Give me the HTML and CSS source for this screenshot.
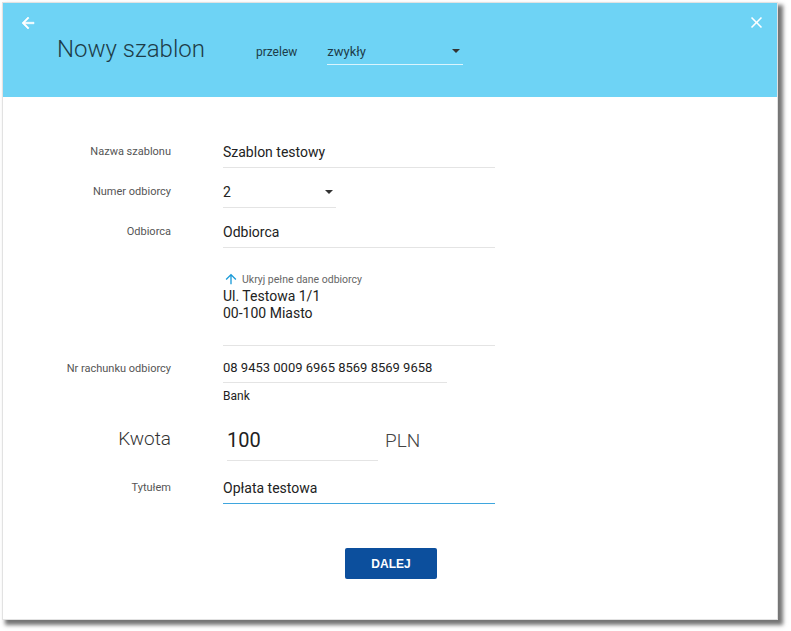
FILE: index.html
```html
<!DOCTYPE html>
<html lang="pl">
<head>
<meta charset="utf-8">
<title>Nowy szablon</title>
<link rel="stylesheet" href="styles.css">
</head>
<body>
<div class="page">
  <div class="card">
    <header class="header">
      <div class="back">
        <svg width="18" height="18" viewBox="0 0 24 24"><path d="M20 11H7.83l5.59-5.59L12 4l-8 8 8 8 1.41-1.41L7.83 13H20v-2z" fill="#fff" stroke="#fff" stroke-width="0.8"/></svg>
      </div>
      <h1 class="title">Nowy szablon</h1>
      <span class="type-label">przelew</span>
      <div class="type-select">
        <span>zwykły</span>
        <span class="caret dark"></span>
      </div>
      <div class="close">
        <svg width="19" height="19" viewBox="0 0 24 24"><path d="M19 6.41L17.59 5 12 10.59 6.41 5 5 6.41 10.59 12 5 17.59 6.41 19 12 13.41 17.59 19 19 17.59 13.41 12z" fill="#fff"/></svg>
      </div>
    </header>
    <main class="form">
      <div class="row">
        <div class="label">Nazwa szablonu</div>
        <div class="field wide">Szablon testowy</div>
      </div>
      <div class="row">
        <div class="label">Numer odbiorcy</div>
        <div class="field narrow select"><span>2</span><span class="caret dark"></span></div>
      </div>
      <div class="row">
        <div class="label">Odbiorca</div>
        <div class="field wide">Odbiorca</div>
      </div>
      <div class="row details">
        <div class="label"></div>
        <div class="detail-box">
          <div class="toggle">
            <svg width="16" height="16" viewBox="0 0 24 24"><path d="M4 12l1.41 1.41L11 7.83V20h2V7.83l5.58 5.59L20 12l-8-8-8 8z" fill="#1b9bd8"/></svg>
            <span>Ukryj pełne dane odbiorcy</span>
          </div>
          <div class="addr">Ul. Testowa 1/1</div>
          <div class="addr">00-100 Miasto</div>
        </div>
      </div>
      <div class="row account">
        <div class="label">Nr rachunku odbiorcy</div>
        <div class="acc-wrap">
          <div class="field account-field">08 9453 0009 6965 8569 8569 9658</div>
          <div class="bank">Bank</div>
        </div>
      </div>
      <div class="row amount">
        <div class="label big">Kwota</div>
        <div class="field amount-field">100</div>
        <div class="currency">PLN</div>
      </div>
      <div class="row">
        <div class="label">Tytułem</div>
        <div class="field wide focused">Opłata testowa</div>
      </div>
      <div class="actions">
        <button class="btn">DALEJ</button>
      </div>
    </main>
  </div>
</div>
</body>
</html>
```
FILE: styles.css
```css
* { box-sizing: border-box; }
html, body { margin: 0; padding: 0; background: #fff; }
body { font-family: Roboto, "Liberation Sans", sans-serif; color: #222; }
.page { padding: 2px 13px 11px 2px; }
.card {
  width: 776px;
  height: 618px;
  background: #fff;
  border: 1px solid #e2e2e2;
  box-shadow: 4px 4px 4px 1px rgba(0,0,0,0.55);
  display: flex;
  flex-direction: column;
}
.header {
  height: 94px;
  background: #6ed3f5;
  display: flex;
  align-items: flex-start;
  position: relative;
}
.back { position: absolute; left: 16px; top: 11px; }
.close { position: absolute; left: 744px; top: 10px; }
.title {
  margin: 31px 0 0 54px;
  font-weight: 300;
  font-size: 24px;
  color: #1d3c48;
  line-height: 30px;
}
.type-label {
  margin: 42px 0 0 51px;
  font-size: 12px;
  color: #1d3c48;
}
.type-select {
  margin: 35px 0 0 30px;
  width: 136px;
  height: 27px;
  border-bottom: 1px solid rgba(255,255,255,0.75);
  display: flex;
  justify-content: space-between;
  align-items: center;
  font-size: 13px;
  color: #1d3c48;
}
.caret {
  width: 0; height: 0;
  border-left: 4px solid transparent;
  border-right: 4px solid transparent;
  border-top: 4px solid #333;
  margin-right: 3px;
}
.form { padding-top: 42px; display: flex; flex-direction: column; }
.row { display: flex; align-items: center; height: 40px; }
.label {
  width: 168px;
  text-align: right;
  font-size: 11px;
  color: #555;
  margin-right: 52px;
  padding-bottom: 16px;
}
.field {
  height: 29px;
  border-bottom: 1px solid #e4e4e4;
  font-size: 14px;
  color: #222;
  display: flex;
  align-items: center;
  padding-bottom: 2px;
  align-self: flex-start;
  white-space: nowrap;
}
.wide { width: 272px; }
.narrow { width: 113px; }
.select { justify-content: space-between; }
.details { height: auto; align-items: flex-start; }
.detail-box {
  width: 272px;
  border-bottom: 1px solid #e4e4e4;
  padding-top: 12px;
  height: 87px;
}
.toggle { display: flex; align-items: center; font-size: 10.5px; color: #666; gap: 3px; margin-bottom: 1px; }
.addr { font-size: 14px; line-height: 17px; color: #222; }
.account { height: auto; align-items: flex-start; margin-top: 8px; }
.account .label { margin-top: 8px; padding-bottom: 0; }
.acc-wrap { display: flex; flex-direction: column; }
.account-field { width: 224px; font-size: 13px; }
.bank { font-size: 12px; color: #222; margin-top: 6px; }
.amount { height: 54px; margin-top: 18px; align-items: flex-start; }
.label.big { font-size: 19px; font-weight: 300; color: #333; margin-top: 6px; padding-bottom: 0; }
.amount-field { width: 151px; height: 40px; font-size: 20px; margin-left: 4px; }
.currency { font-size: 19px; font-weight: 300; color: #444; margin: 8px 0 0 7px; }
.field.focused { border-bottom: 1px solid #3fa6de; }
.actions { display: flex; padding: 33px 0 0 342px; }
.btn {
  width: 92px;
  height: 31px;
  background: #0c4f9d;
  color: #fff;
  border: none;
  border-radius: 2px;
  font-family: Arial, "Liberation Sans", sans-serif;
  font-weight: bold;
  font-size: 12px;
}
```
